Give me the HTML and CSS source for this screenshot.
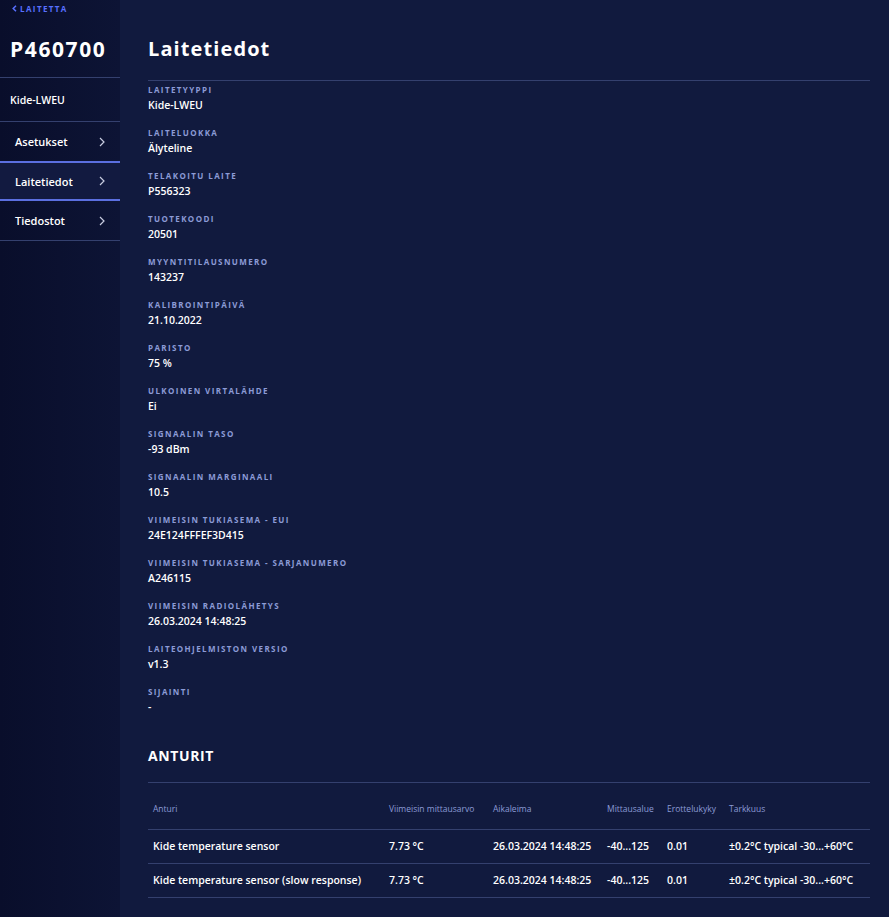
FILE: index.html
```html
<!DOCTYPE html>
<html lang="fi">
<head>
  <meta charset="UTF-8">
  <meta name="viewport" content="width=device-width, initial-scale=1.0">
  <title>Laitetiedot</title>
  <link rel="stylesheet" href="styles.css">
</head>
<body>
  <div class="sivu">
    <aside class="sivupalkki">
      <a class="takaisin" href="#"><svg width="5" height="7" viewBox="0 0 5 7"><path d="M4 0.8 L1.2 3.5 L4 6.2" fill="none" stroke="currentColor" stroke-width="1.5"/></svg>LAITETTA</a>
      <div class="laitenumero">P460700</div>
      <div class="laitetyyppi">Kide-LWEU</div>
      <nav class="valikko">
        <a href="#" class="valikko-kohta">Asetukset <svg class="nuoli" width="6" height="10" viewBox="0 0 6 10"><path d="M1 1 L5 5 L1 9" fill="none" stroke="currentColor" stroke-width="1.2"/></svg></a>
        <a href="#" class="valikko-kohta aktiivinen">Laitetiedot <svg class="nuoli" width="6" height="10" viewBox="0 0 6 10"><path d="M1 1 L5 5 L1 9" fill="none" stroke="currentColor" stroke-width="1.2"/></svg></a>
        <a href="#" class="valikko-kohta">Tiedostot <svg class="nuoli" width="6" height="10" viewBox="0 0 6 10"><path d="M1 1 L5 5 L1 9" fill="none" stroke="currentColor" stroke-width="1.2"/></svg></a>
      </nav>
    </aside>

    <main class="sisalto">
      <h1>Laitetiedot</h1>
      <div class="tiedot">
        <div class="tieto"><div class="otsake">Laitetyyppi</div><div class="arvo">Kide-LWEU</div></div>
        <div class="tieto"><div class="otsake">Laiteluokka</div><div class="arvo">Älyteline</div></div>
        <div class="tieto"><div class="otsake">Telakoitu laite</div><div class="arvo">P556323</div></div>
        <div class="tieto"><div class="otsake">Tuotekoodi</div><div class="arvo">20501</div></div>
        <div class="tieto"><div class="otsake">Myyntitilausnumero</div><div class="arvo">143237</div></div>
        <div class="tieto"><div class="otsake">Kalibrointipäivä</div><div class="arvo">21.10.2022</div></div>
        <div class="tieto"><div class="otsake">Paristo</div><div class="arvo">75 %</div></div>
        <div class="tieto"><div class="otsake">Ulkoinen virtalähde</div><div class="arvo">Ei</div></div>
        <div class="tieto"><div class="otsake">Signaalin taso</div><div class="arvo">-93 dBm</div></div>
        <div class="tieto"><div class="otsake">Signaalin marginaali</div><div class="arvo">10.5</div></div>
        <div class="tieto"><div class="otsake">Viimeisin tukiasema - EUI</div><div class="arvo">24E124FFFEF3D415</div></div>
        <div class="tieto"><div class="otsake">Viimeisin tukiasema - sarjanumero</div><div class="arvo">A246115</div></div>
        <div class="tieto"><div class="otsake">Viimeisin radiolähetys</div><div class="arvo">26.03.2024 14:48:25</div></div>
        <div class="tieto"><div class="otsake">Laiteohjelmiston versio</div><div class="arvo">v1.3</div></div>
        <div class="tieto"><div class="otsake">Sijainti</div><div class="arvo">-</div></div>
      </div>

      <h2>ANTURIT</h2>
      <table class="anturit">
        <thead>
          <tr>
            <th class="c-nimi">Anturi</th>
            <th class="c-arvo">Viimeisin mittausarvo</th>
            <th class="c-aika">Aikaleima</th>
            <th class="c-alue">Mittausalue</th>
            <th class="c-erot">Erottelukyky</th>
            <th>Tarkkuus</th>
          </tr>
        </thead>
        <tbody>
          <tr>
            <td>Kide temperature sensor</td>
            <td>7.73 °C</td>
            <td>26.03.2024 14:48:25</td>
            <td>-40...125</td>
            <td>0.01</td>
            <td>±0.2°C typical -30...+60°C</td>
          </tr>
          <tr>
            <td>Kide temperature sensor (slow response)</td>
            <td>7.73 °C</td>
            <td>26.03.2024 14:48:25</td>
            <td>-40...125</td>
            <td>0.01</td>
            <td>±0.2°C typical -30...+60°C</td>
          </tr>
        </tbody>
      </table>
    </main>
  </div>
</body>
</html>
```

FILE: styles.css
```css
* {
  box-sizing: border-box;
}
body {
  margin: 0;
  font-family: "Open Sans", Arial, sans-serif;
  background-color: #111a3e;
  color: #ffffff;
}
a {
  color: inherit;
  text-decoration: none;
}
.sivu {
  display: flex;
  min-height: 917px;
}
.sivupalkki {
  width: 120px;
  flex-shrink: 0;
  background: linear-gradient(to right, #090e2b, #0d1435);
}
.takaisin {
  display: flex;
  align-items: center;
  gap: 3px;
  padding: 3px 0 0 12px;
  height: 14px;
  font-size: 8px;
  font-weight: 700;
  letter-spacing: 1.4px;
  color: #5870ff;
}
.laitenumero {
  padding: 21px 0 0 10px;
  height: 64px;
  font-size: 21px;
  font-weight: 700;
  letter-spacing: 1.6px;
  border-bottom: 1px solid #34406e;
}
.laitetyyppi {
  height: 44px;
  padding: 15px 0 0 10px;
  font-size: 10.5px;
  font-weight: 600;
  border-bottom: 1px solid #34406e;
}
.valikko-kohta {
  display: flex;
  justify-content: space-between;
  align-items: center;
  height: 40px;
  padding: 0 15px 0 15px;
  font-size: 11px;
  font-weight: 600;
  border-bottom: 1px solid #34406e;
}
.valikko-kohta.aktiivinen {
  background-color: #121a40;
  border-top: 2px solid #5b6fe0;
  border-bottom: 2px solid #5b6fe0;
  margin-top: -1px;
}
.nuoli {
  color: #c8cce0;
}
.sisalto {
  flex: 1;
  padding: 0 19px 0 28px;
}
h1 {
  margin: 0;
  padding: 35px 0 0;
  height: 81px;
  font-size: 20px;
  font-weight: 700;
  letter-spacing: 1.1px;
  border-bottom: 1px solid #34406e;
}
.tieto {
  height: 43px;
}
.otsake {
  padding-top: 3px;
  height: 17px;
  font-size: 8px;
  font-weight: 700;
  letter-spacing: 1.4px;
  text-transform: uppercase;
  color: #8c9bd6;
}
.arvo {
  font-size: 10.5px;
  font-weight: 600;
}
h2 {
  margin: 0;
  padding-top: 20px;
  height: 57px;
  font-size: 14px;
  font-weight: 700;
  letter-spacing: 0.6px;
  border-bottom: 1px solid #34406e;
}
.anturit {
  width: 100%;
  border-collapse: collapse;
}
.anturit th {
  height: 46px;
  padding: 6px 5px 0;
  text-align: left;
  font-size: 8.5px;
  font-weight: 400;
  color: #8c9bd6;
  border-bottom: 1px solid #34406e;
}
.anturit td {
  height: 34px;
  padding: 0 5px;
  font-size: 10.5px;
  font-weight: 600;
  border-bottom: 1px solid #34406e;
}
.c-nimi {
  width: 236px;
}
.c-arvo {
  width: 104px;
}
.c-aika {
  width: 114px;
}
.c-alue {
  width: 60px;
}
.c-erot {
  width: 62px;
}
```
